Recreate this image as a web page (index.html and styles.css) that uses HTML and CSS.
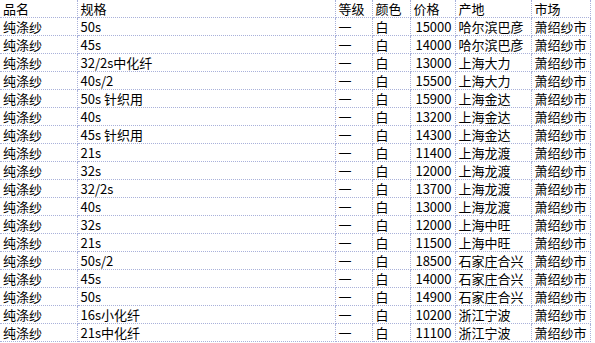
FILE: index.html
```html
<!DOCTYPE html>
<html lang="zh">
<head>
<meta charset="utf-8">
<link rel="stylesheet" href="styles.css">
</head>
<body>
<table class="grid">
<colgroup>
<col class="c-name"><col class="c-spec"><col class="c-grade"><col class="c-color"><col class="c-price"><col class="c-origin"><col class="c-market">
</colgroup>
<tbody>
<tr><td>品名</td><td>规格</td><td>等级</td><td>颜色</td><td>价格</td><td>产地</td><td>市场</td></tr>
<tr><td>纯涤纱</td><td>50s</td><td>一</td><td>白</td><td class="num">15000</td><td>哈尔滨巴彦</td><td>萧绍纱市</td></tr>
<tr><td>纯涤纱</td><td>45s</td><td>一</td><td>白</td><td class="num">14000</td><td>哈尔滨巴彦</td><td>萧绍纱市</td></tr>
<tr><td>纯涤纱</td><td>32/2s中化纤</td><td>一</td><td>白</td><td class="num">13000</td><td>上海大力</td><td>萧绍纱市</td></tr>
<tr><td>纯涤纱</td><td>40s/2</td><td>一</td><td>白</td><td class="num">15500</td><td>上海大力</td><td>萧绍纱市</td></tr>
<tr><td>纯涤纱</td><td>50s 针织用</td><td>一</td><td>白</td><td class="num">15900</td><td>上海金达</td><td>萧绍纱市</td></tr>
<tr><td>纯涤纱</td><td>40s</td><td>一</td><td>白</td><td class="num">13200</td><td>上海金达</td><td>萧绍纱市</td></tr>
<tr><td>纯涤纱</td><td>45s 针织用</td><td>一</td><td>白</td><td class="num">14300</td><td>上海金达</td><td>萧绍纱市</td></tr>
<tr><td>纯涤纱</td><td>21s</td><td>一</td><td>白</td><td class="num">11400</td><td>上海龙渡</td><td>萧绍纱市</td></tr>
<tr><td>纯涤纱</td><td>32s</td><td>一</td><td>白</td><td class="num">12000</td><td>上海龙渡</td><td>萧绍纱市</td></tr>
<tr><td>纯涤纱</td><td>32/2s</td><td>一</td><td>白</td><td class="num">13700</td><td>上海龙渡</td><td>萧绍纱市</td></tr>
<tr><td>纯涤纱</td><td>40s</td><td>一</td><td>白</td><td class="num">13000</td><td>上海龙渡</td><td>萧绍纱市</td></tr>
<tr><td>纯涤纱</td><td>32s</td><td>一</td><td>白</td><td class="num">12000</td><td>上海中旺</td><td>萧绍纱市</td></tr>
<tr><td>纯涤纱</td><td>21s</td><td>一</td><td>白</td><td class="num">11500</td><td>上海中旺</td><td>萧绍纱市</td></tr>
<tr><td>纯涤纱</td><td>50s/2</td><td>一</td><td>白</td><td class="num">18500</td><td>石家庄合兴</td><td>萧绍纱市</td></tr>
<tr><td>纯涤纱</td><td>45s</td><td>一</td><td>白</td><td class="num">14000</td><td>石家庄合兴</td><td>萧绍纱市</td></tr>
<tr><td>纯涤纱</td><td>50s</td><td>一</td><td>白</td><td class="num">14900</td><td>石家庄合兴</td><td>萧绍纱市</td></tr>
<tr><td>纯涤纱</td><td>16s小化纤</td><td>一</td><td>白</td><td class="num">10200</td><td>浙江宁波</td><td>萧绍纱市</td></tr>
<tr><td>纯涤纱</td><td>21s中化纤</td><td>一</td><td>白</td><td class="num">11100</td><td>浙江宁波</td><td>萧绍纱市</td></tr>
</tbody>
</table>
</body>
</html>
```
FILE: styles.css
```css
html, body {
  margin: 0;
  padding: 0;
  background: #ffffff;
}
.grid {
  border-collapse: collapse;
  table-layout: fixed;
  width: 590px;
  font-family: "Noto Sans CJK SC", "Noto Sans", sans-serif;
  font-size: 13px;
  color: #000000;
}
.c-name { width: 77px; }
.c-spec { width: 258px; }
.c-grade { width: 37px; }
.c-color { width: 38px; }
.c-price { width: 45px; }
.c-origin { width: 76px; }
.c-market { width: 59px; }
.grid td {
  height: 17px;
  padding: 0 2px 0 3px;
  border-right: 1px dotted #a9b1da;
  border-bottom: 1px dotted #a9b1da;
  line-height: 17px;
  white-space: nowrap;
  overflow: hidden;
  vertical-align: middle;
  box-sizing: border-box;
}
.grid td.num {
  text-align: right;
  padding-right: 3px;
}
```
